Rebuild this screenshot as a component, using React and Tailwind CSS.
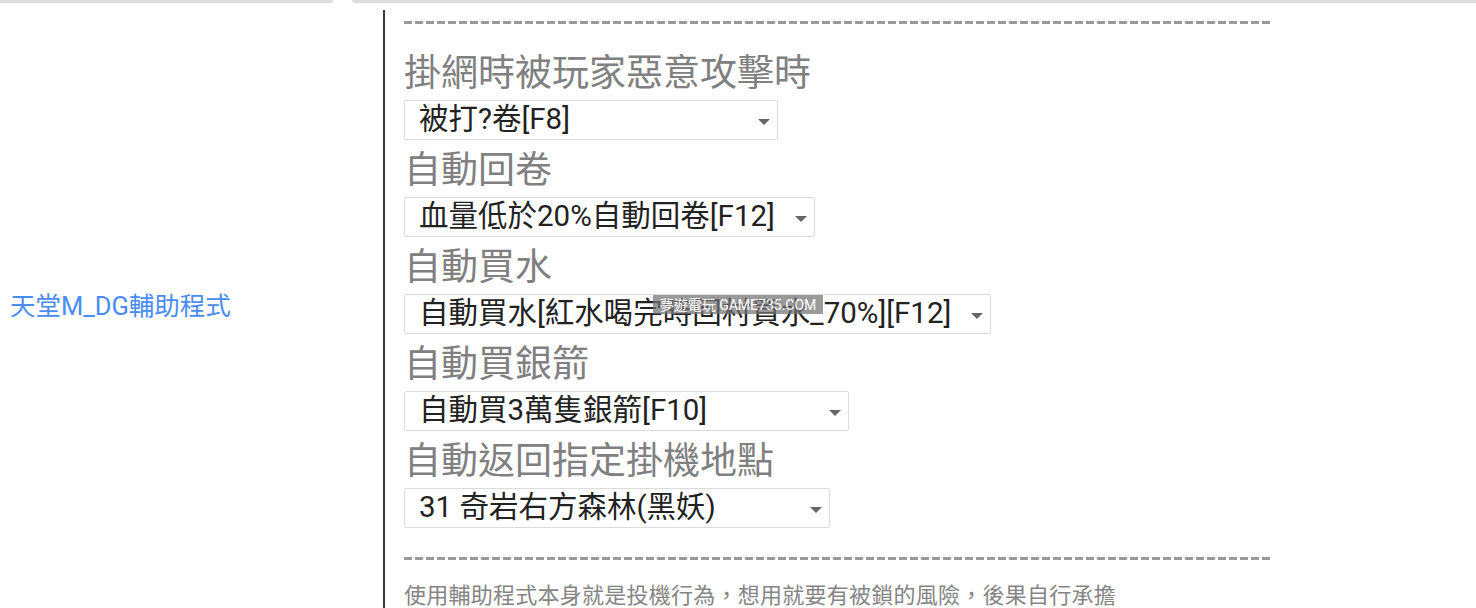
import React from "react";

const FONT = { fontFamily: '"Roboto", "Noto Sans CJK TC", sans-serif' };

function Dashes() {
  return (
    <div className="h-[3px] w-[866px] bg-[repeating-linear-gradient(90deg,#9a9a9a_0px,#9a9a9a_8px,transparent_8px,transparent_11px)]" />
  );
}

function Arrow() {
  return (
    <svg width="12" height="6" viewBox="0 0 12 6" className="absolute right-[7px] top-[18px]">
      <path d="M0 0 L12 0 L6 6 Z" fill="#666" />
    </svg>
  );
}

function Select({ width, children, overlay }) {
  return (
    <div
      className="relative flex h-[40px] items-center border border-[#dcdcdc] bg-white pl-[14px] text-[29.5px] text-[#222] rounded-[2px]"
      style={{ width }}
    >
      <span className="whitespace-nowrap leading-none">{children}</span>
      <Arrow />
      {overlay}
    </div>
  );
}

function Heading({ children }) {
  return (
    <div className="pt-[4px] text-[37px] leading-[53px] text-[#808080] whitespace-nowrap">{children}</div>
  );
}

export default function App() {
  const items = [
    { h: "掛網時被玩家惡意攻擊時", v: "被打?卷[F8]", w: 374 },
    { h: "自動回卷", v: "血量低於20%自動回卷[F12]", w: 411 },
    {
      h: "自動買水",
      v: "自動買水[紅水喝完時回村買水_70%][F12]",
      w: 587,
      overlay: (
        <div className="absolute left-[248px] top-[0px] flex h-[19px] w-[170px] items-center justify-center bg-[rgba(115,115,115,0.72)] text-[14px] leading-none text-white whitespace-nowrap">
          夢遊電玩 GAME735.COM
        </div>
      ),
    },
    { h: "自動買銀箭", v: "自動買3萬隻銀箭[F10]", w: 445 },
    { h: "自動返回指定掛機地點", v: "31 奇岩右方森林(黑妖)", w: 426 },
  ];

  return (
    <div className="h-[608px] w-[1476px] overflow-hidden bg-white" style={FONT}>
      <div className="flex h-[3px]">
        <div className="w-[333px] bg-[#dddddd] rounded-br-[3px]" />
        <div className="w-[19px]" />
        <div className="flex-1 bg-[#dddddd] rounded-bl-[3px]" />
      </div>
      <div className="flex h-[605px]">
        <div className="flex w-[383px] items-center pl-[10px] pt-[3px]">
          <span className="text-[25.5px] leading-none text-[#4a8cf5] whitespace-nowrap">天堂M_DG輔助程式</span>
        </div>
        <div className="mt-[7px] flex-1 border-l-2 border-[#3a3a3a] pl-[19px] pt-[11px]">
          <Dashes />
          <div className="mt-[19px] flex flex-col">
            {items.map((it) => (
              <div key={it.h} className="flex flex-col">
                <Heading>{it.h}</Heading>
                <Select width={it.w} overlay={it.overlay}>
                  {it.v}
                </Select>
              </div>
            ))}
          </div>
          <div className="mt-[29px]">
            <Dashes />
          </div>
          <div className="mt-[23px] text-[22px] leading-[26px] tracking-[0.25px] text-[#858585] whitespace-nowrap">
            使用輔助程式本身就是投機行為，想用就要有被鎖的風險，後果自行承擔
          </div>
        </div>
      </div>
    </div>
  );
}
